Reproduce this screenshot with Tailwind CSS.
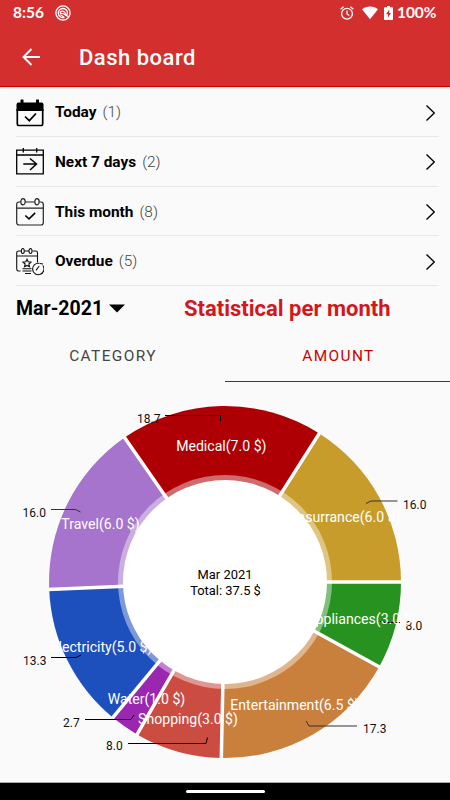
<!DOCTYPE html>
<html lang="en">

<head>
    <meta charset="UTF-8">
    <meta name="viewport" content="width=device-width, initial-scale=1.0">
    <title>Dash board</title>
    <script src="https://cdn.jsdelivr.net/npm/@tailwindcss/browser@4"></script>
</head>

<body class="bg-black">
    <div class="w-[450px] h-[800px] flex flex-col overflow-hidden bg-[#fafafa] font-['Roboto',sans-serif] text-black">
        <header class="h-[87px] shrink-0 bg-[#d32f2f] border-b border-[#cc0000] text-white shadow-[0_1px_2px_rgba(0,0,0,0.15)]">
            <!-- status bar -->
            <div class="h-[27px] flex items-center pl-[13px] pr-[14px] pb-px font-['Lato',sans-serif] font-bold text-base leading-none">
                <span class="w-[42px] text-[15.5px]">8:56</span>
                <svg class="w-4 h-4" viewBox="0 0 16 16" fill="none" stroke="#fff">
                    <circle cx="8" cy="8" r="7.100" stroke-width="1.3" />
                    <path d="M12.300 9.500A4.600 4.600 0 1 0 9.500 12.400" stroke-width="1.4" />
                    <path d="M5 7.800C5.500 5.800 8 5.600 9.300 7l3.500 4.500L8.500 8.800C7.500 8.200 6.300 8 5 9" stroke-width="1.2" />
                    <path d="M5.500 10l3.500 2" stroke-width="1.2" />
                </svg>
                <div class="flex-grow"></div>
                <svg class="w-[14px] h-[14px] mr-2" viewBox="0 0 14 14" fill="none" stroke="#fff" stroke-width="1.3">
                    <circle cx="7" cy="7.700" r="5.400" />
                    <path d="M7 4.500v3.500l2.300 1.500M0.600 3.200L3.600 0.700M13.400 3.200L10.400 0.700" />
                </svg>
                <svg class="w-4 h-[14px] mr-[6px]" viewBox="0 0 16 14" fill="#fff">
                    <path d="M0 3.300C4.500-0.300 11.500-0.300 16 3.300L8 13.200z" />
                </svg>
                <svg class="w-[9px] h-[14px] mr-[4px]" viewBox="0 0 9 14">
                    <path d="M1 1.300h2V0h3v1.300h2q1 0 1 1V13q0 1-1 1H1q-1 0-1-1V2.300q0-1 1-1z" fill="#fff" />
                    <path d="M5.200 3.500L2 8.300h2v3.300L7 6.900H5.200z" fill="#d32f2f" />
                </svg>
                <span class="w-[39px] text-[15.5px] tracking-[-0.1px]">100%</span>
            </div>
            <!-- app bar -->
            <div class="h-[60px] flex items-center pl-[22px]">
                <svg class="w-[18px] h-[18px]" viewBox="0 0 18 18" fill="none" stroke="#fff" stroke-width="1.900">
                    <path d="M18 9H1.500M9.500 1L1.500 9l8 8" />
                </svg>
                <h1 class="ml-[39px] pt-[2px] text-[22px] leading-none font-medium tracking-[0.5px]">Dash board</h1>
            </div>
        </header>

        <ul class="pt-[0.6px] pl-4 pr-[11px] shrink-0">
            <li class="h-[49.6px] flex items-center pt-[2px] border-b border-[#e8e8e8]">
                <svg class="w-7 h-7 mr-[11px]" viewBox="0 0 28 28">
                    <path d="M2.500 3.500h23q2 0 2 2V12H0.500V5.500q0-2 2-2z" />
                    <rect x="4.500" y="0.500" width="3" height="5" rx="0.500" />
                    <rect x="20" y="0.500" width="3" height="5" rx="0.500" />
                    <path d="M1.300 10v14.800q0 1.700 1.700 1.700h22q1.700 0 1.700-1.700V10M9 17.500l4.300 4.200 6.700-7.200" fill="none" stroke="#000" stroke-width="1.700" />
                </svg>
                <span class="font-bold text-[15.4px]">Today</span>
                <span class="ml-[6px] text-[15.4px] font-light text-[#444]">(1)</span>
                <svg class="w-[9px] h-4 ml-auto mr-[4px]" viewBox="0 0 9 16" fill="none" stroke="#000" stroke-width="1.400">
                    <path d="M0.500 0.500L8.300 8l-7.800 7.500" />
                </svg>
            </li>
            <li class="h-[49.6px] flex items-center pt-[2px] border-b border-[#e8e8e8]">
                <svg class="w-7 h-7 mr-[11px]" viewBox="0 0 28 28" fill="none" stroke="#000" stroke-width="1.300">
                    <path d="M0.700 2.200h26.600v23.600H0.700zM0.700 7h26.600M7.300 0v4.500M20.700 0v4.500" />
                    <path d="M7.300 16H20.500M14 10.500l6.500 5.500-6.500 6" stroke-width="1.500" />
                </svg>
                <span class="font-bold text-[15.4px]">Next 7 days</span>
                <span class="ml-[6px] text-[15.4px] font-light text-[#444]">(2)</span>
                <svg class="w-[9px] h-4 ml-auto mr-[4px]" viewBox="0 0 9 16" fill="none" stroke="#000" stroke-width="1.400">
                    <path d="M0.500 0.500L8.300 8l-7.800 7.500" />
                </svg>
            </li>
            <li class="h-[49.6px] flex items-center pt-[2px] border-b border-[#e8e8e8]">
                <svg class="w-7 h-7 mr-[11px]" viewBox="0 0 28 28" fill="none" stroke="#222" stroke-width="1.200">
                    <path d="M4.500 4H3Q0.700 4 0.700 6.500v18Q0.700 27 3 27h22q2.300 0 2.300-2.500v-18Q27.300 4 25 4h-1.500M9.500 4h9M0.700 10.200h26.600" />
                    <ellipse cx="7" cy="3.800" rx="2.200" ry="3.100" />
                    <ellipse cx="21" cy="3.800" rx="2.200" ry="3.100" />
                    <path d="M9.300 17.500l3.700 3.400 6.200-6" stroke="#000" stroke-width="1.500" />
                </svg>
                <span class="font-bold text-[15.4px]">This month</span>
                <span class="ml-[6px] text-[15.4px] font-light text-[#444]">(8)</span>
                <svg class="w-[9px] h-4 ml-auto mr-[4px]" viewBox="0 0 9 16" fill="none" stroke="#000" stroke-width="1.400">
                    <path d="M0.500 0.500L8.300 8l-7.800 7.500" />
                </svg>
            </li>
            <li class="h-[49.6px] flex items-center pt-[2px] border-b border-[#e8e8e8]">
                <svg class="w-7 h-7 mr-[11px]" viewBox="0 0 28 28" fill="none" stroke="#111" stroke-width="1.100">
                    <path d="M5 3H2.500Q0.700 3 0.700 4.800v16.200Q0.700 23 2.500 23H4.500M8.500 3h4.500M16.500 3h3.300Q21.500 3 21.500 4.800V14.500M0.700 8h20.800" />
                    <ellipse cx="6.800" cy="3" rx="1.500" ry="2.500" />
                    <ellipse cx="14.500" cy="3" rx="1.500" ry="2.500" />
                    <path d="M11 11.200l1.200 2.600 2.800.3-2.100 1.900.6 2.800-2.500-1.400-2.500 1.400.6-2.800L7 14.100l2.800-.3z" />
                    <path d="M6.500 20.700h9M6.500 23h9M9 25.500h6" />
                    <path d="M26.800 17.500A5.700 5.700 0 1 1 23.500 15.400M20 22.300l3.200-4.300M24 15.500l3 0.500" />
                </svg>
                <span class="font-bold text-[15.4px]">Overdue</span>
                <span class="ml-[6px] text-[15.4px] font-light text-[#444]">(5)</span>
                <svg class="w-[9px] h-4 ml-auto mr-[4px]" viewBox="0 0 9 16" fill="none" stroke="#000" stroke-width="1.400">
                    <path d="M0.500 0.500L8.300 8l-7.800 7.500" />
                </svg>
            </li>
        </ul>

        <div class="h-[46px] shrink-0 flex items-center pl-4">
            <span class="w-[93px] text-[19.5px] leading-none font-bold">Mar-2021</span>
            <svg class="w-4 h-[9px]" viewBox="0 0 16 9">
                <path d="M0 0.500h16L8 8.500z" />
            </svg>
            <span class="ml-[59px] text-[22px] leading-none font-bold text-[#d3181d]">Statistical per month</span>
        </div>

        <div class="h-[50px] shrink-0 grid grid-cols-2 text-center text-[15.4px] leading-[48px] tracking-[1.4px]">
            <a href="#" class="pl-px text-[#444]">CATEGORY</a>
            <a href="#" class="pl-[2px] text-[#cc0000] border-b border-[#cc0000]">AMOUNT</a>
        </div>

        <svg class="w-[450px] h-[400px] shrink-0" viewBox="0 382 450 400">
            <!-- slices -->
            <path d="M225 582H401A176 176 0 0 1 379.200 666.800z" fill="#27921f" />
            <path d="M225 582L379.200 666.800A176 176 0 0 1 221.300 758z" fill="#c9803c" />
            <path d="M225 582L221.300 758A176 176 0 0 1 137 734.400z" fill="#cb4d42" />
            <path d="M225 582L137 734.400A176 176 0 0 1 112.800 717.600z" fill="#9b26b0" />
            <path d="M225 582L112.800 717.600A176 176 0 0 1 49.200 589.400z" fill="#1e50bd" />
            <path d="M225 582L49.200 589.400A176 176 0 0 1 124.600 437.500z" fill="#a674cc" />
            <path d="M225 582L124.600 437.500A176 176 0 0 1 319.300 433.400z" fill="#ae0004" />
            <path d="M225 582L319.300 433.400A176 176 0 0 1 401 582z" fill="#c79c2b" />
            <circle cx="225" cy="582" r="107" fill="#fff" fill-opacity="0.420" />
            <path d="M225 582H402M225 582L380 667.300M225 582L221.300 759M225 582L136.500 735.300M225 582L112.200 718.300M225 582L48.200 589.400M225 582L124 436.700M225 582L319.800 432.600" stroke="#fff" stroke-width="3.500" />
            <circle cx="225" cy="582" r="102" fill="#fff" />

            <!-- value lines -->
            <g fill="none" stroke="#000" stroke-width="1">
                <path d="M165 415.500h55.500v5.500" />
                <path d="M51 509.500h24.500l5 2.500" stroke="#333" />
                <path d="M51 657.500h25l5-2.500" />
                <path d="M85 719.500h46l3-4.500" />
                <path d="M128 743.500h78l1.500-6" />
                <path d="M306 721l3 5h48" stroke="#333" />
                <path d="M380 621.500l5 1h15" />
                <path d="M366 503.500l5-2.500h26.500" stroke="#333" />
            </g>
            <g class="text-[12px]" fill="#111">
                <text x="137" y="423">18.7</text>
                <text x="22.500" y="516.500">16.0</text>
                <text x="23" y="664.500">13.3</text>
                <text x="63" y="727">2.7</text>
                <text x="106" y="750.300">8.0</text>
                <text x="363" y="733">17.3</text>
                <text x="405.500" y="629.500">8.0</text>
                <text x="403" y="508.500">16.0</text>
            </g>
            <g class="text-[14.1px]" fill="#fff" text-anchor="middle">
                <text x="221.300" y="451">Medical(7.0 $)</text>
                <text x="100.500" y="529">Travel(6.0 $)</text>
                <text x="101.500" y="652.300">Electricity(5.0 $)</text>
                <text x="146.500" y="704.300">Water(1.0 $)</text>
                <text x="188" y="724">Shopping(3.0 $)</text>
                <text x="295" y="709.500">Entertainment(6.5 $)</text>
                <text x="361.500" y="623.500">Appliances(3.0 $)</text>
                <text x="347" y="522">Insurrance(6.0 $)</text>
            </g>
            <g class="text-[12.9px]" fill="#000" text-anchor="middle">
                <text x="225" y="579">Mar 2021</text>
                <text x="225.500" y="594.500">Total: 37.5 $</text>
            </g>
        </svg>

        <footer class="flex-grow bg-black border-t border-[#aaa] flex justify-center items-center">
            <div class="w-[79px] h-[3px] rounded-full bg-white"></div>
        </footer>
    </div>
</body>

</html>
